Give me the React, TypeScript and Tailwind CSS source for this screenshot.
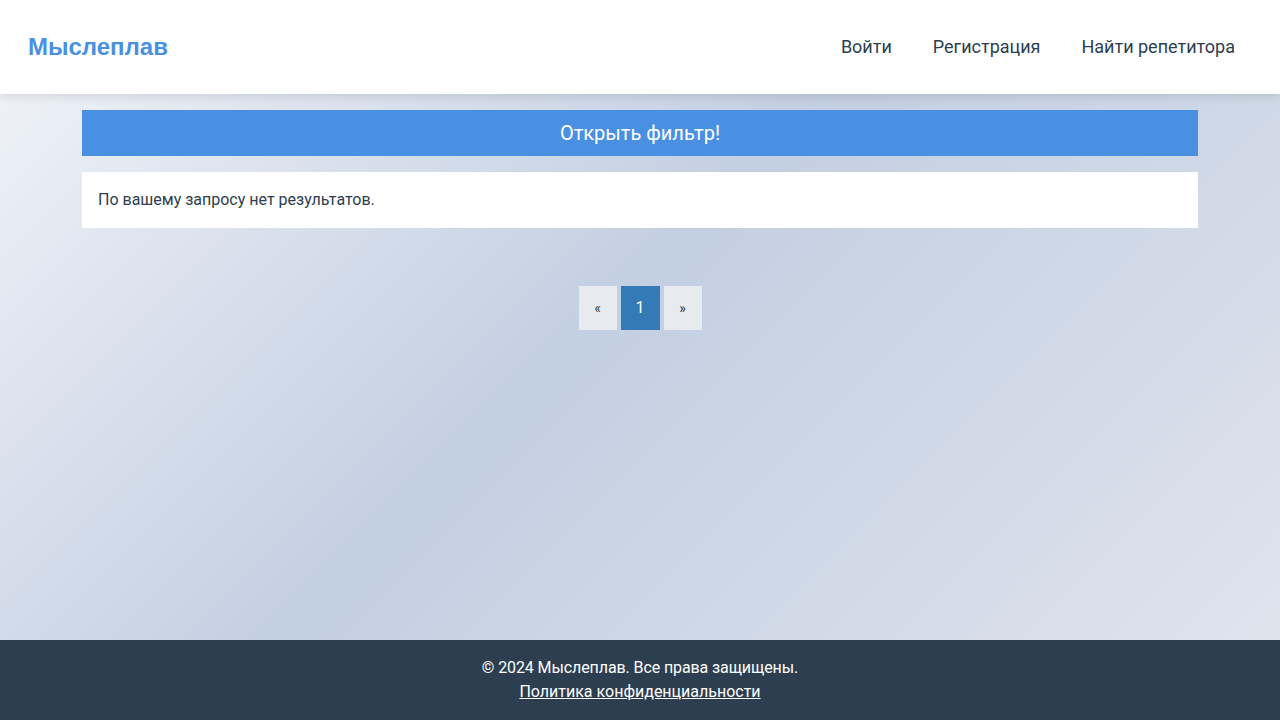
import React from "react";

export default function App() {
  return (
    <div
      className="flex min-h-[720px] flex-col"
      style={{ fontFamily: "Roboto, 'Noto Sans', sans-serif" }}
    >
      <header className="relative z-10 flex h-[94px] items-center justify-between bg-white pl-[28px] pr-[45px] shadow-[0_2px_10px_rgba(0,0,0,0.12)]">
        <div
          className="text-[24px] font-bold text-[#4a90e2]"
          style={{ fontFamily: "'Liberation Sans', Arial, sans-serif" }}
        >
          Мыслеплав
        </div>
        <nav className="flex items-center gap-[41px] pb-[2px] text-[18px] text-[#2c3e50]">
          <a>Войти</a>
          <a>Регистрация</a>
          <a>Найти репетитора</a>
        </nav>
      </header>
      <main className="flex-1 bg-[linear-gradient(135deg,#eef1f7_0%,#c3cfe2_45%,#dfe4ed_100%)] px-[82px] pt-[16px]">
        <button className="flex h-[46px] w-full items-center justify-center bg-[#4a90e2] text-[20px] text-white">
          Открыть фильтр!
        </button>
        <div className="mt-[16px] flex h-[56px] items-center bg-white px-[16px] text-[16px] text-[#2c3e50]">
          По вашему запросу нет результатов.
        </div>
        <div className="mt-[58px] flex justify-center gap-[4px]">
          <span className="flex h-[44px] w-[38px] items-center justify-center bg-[#e7ebef] text-[14px] text-[#2c3e50]">
            «
          </span>
          <span className="flex h-[44px] w-[39px] items-center justify-center bg-[#337ab7] text-[16px] text-white">
            1
          </span>
          <span className="flex h-[44px] w-[38px] items-center justify-center bg-[#e7ebef] text-[14px] text-[#2c3e50]">
            »
          </span>
        </div>
      </main>
      <footer className="flex h-[80px] flex-col items-center justify-center bg-[#2c3e50] text-[16px] leading-[24px] text-white">
        <p className="tracking-[-0.1px]">© 2024 Мыслеплав. Все права защищены.</p>
        <a className="underline">Политика конфиденциальности</a>
      </footer>
    </div>
  );
}
